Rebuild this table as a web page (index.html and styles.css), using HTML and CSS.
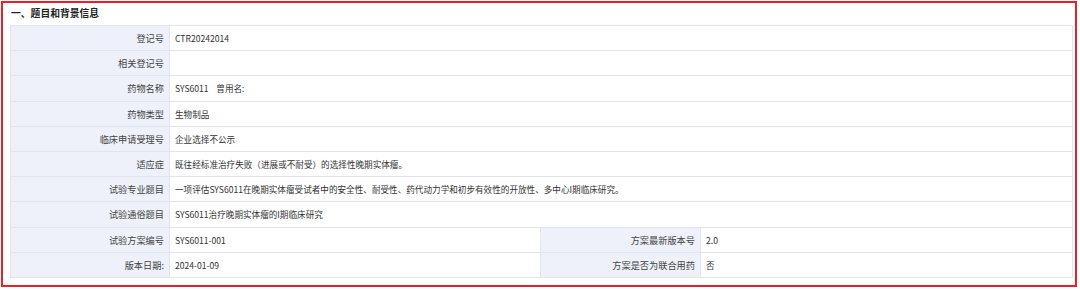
FILE: index.html
```html
<!DOCTYPE html>
<html lang="zh">
<head>
<meta charset="utf-8">
<link rel="stylesheet" href="styles.css">
</head>
<body>
<div class="panel">
  <div class="title">一、题目和背景信息</div>
  <table class="info">
    <colgroup>
      <col class="c-label">
      <col class="c-value">
      <col class="c-label2">
      <col class="c-value2">
    </colgroup>
    <tr><th>登记号</th><td colspan="3">CTR20242014</td></tr>
    <tr><th>相关登记号</th><td colspan="3"></td></tr>
    <tr><th>药物名称</th><td colspan="3">SYS6011&nbsp;&nbsp;&nbsp;&nbsp;曾用名:</td></tr>
    <tr><th>药物类型</th><td colspan="3">生物制品</td></tr>
    <tr><th>临床申请受理号</th><td colspan="3">企业选择不公示</td></tr>
    <tr><th>适应症</th><td colspan="3">既往经标准治疗失败（进展或不耐受）的选择性晚期实体瘤。</td></tr>
    <tr><th>试验专业题目</th><td colspan="3">一项评估SYS6011在晚期实体瘤受试者中的安全性、耐受性、药代动力学和初步有效性的开放性、多中心I期临床研究。</td></tr>
    <tr><th>试验通俗题目</th><td colspan="3">SYS6011治疗晚期实体瘤的I期临床研究</td></tr>
    <tr><th>试验方案编号</th><td>SYS6011-001</td><th>方案最新版本号</th><td>2.0</td></tr>
    <tr><th>版本日期:</th><td>2024-01-09</td><th>方案是否为联合用药</th><td>否</td></tr>
  </table>
</div>
</body>
</html>
```
FILE: styles.css
```css
html, body {
  margin: 0;
  padding: 0;
  background: #ffffff;
}
body {
  font-family: "Noto Sans CJK SC", "Noto Sans", sans-serif;
  color: #333333;
}
.panel {
  margin: 1px;
  height: 282px;
  border: 2px solid #e8202a;
  padding: 0 3px 0 7px;
  box-sizing: content-box;
  width: 1062px;
}
.title {
  height: 22px;
  line-height: 20px;
  font-size: 9.8px;
  font-weight: bold;
  color: #222222;
  padding-left: 1px;
}
.info {
  border-collapse: collapse;
  table-layout: fixed;
  width: 1062px;
  font-size: 9.2px;
}
.c-label { width: 159px; }
.c-value { width: 371px; }
.c-label2 { width: 160px; }
.c-value2 { width: 372px; }
.info th, .info td {
  height: 24.2px;
  padding: 0 5px;
  border: 1px solid #e3e5ea;
  font-weight: normal;
  white-space: nowrap;
  overflow: hidden;
}
.info th {
  background: #eef1f9;
  text-align: right;
  color: #444444;
}
.info td {
  background: #ffffff;
  text-align: left;
  color: #333333;
  font-size: 8.6px;
}
```
